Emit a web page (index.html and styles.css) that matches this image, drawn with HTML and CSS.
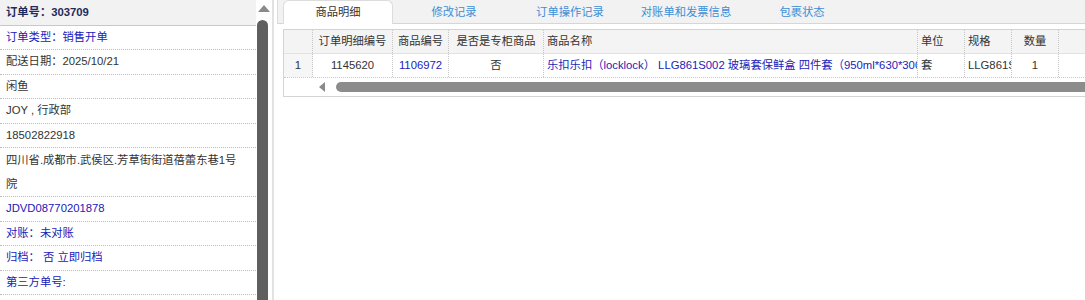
FILE: index.html
```html
<!DOCTYPE html>
<html lang="zh-CN">
<head>
  <meta charset="UTF-8">
  <title>订单详情</title>
  <link rel="stylesheet" href="styles.css">
</head>
<body>
  <div class="page">
    <div class="side">
      <div class="side-list">
        <div class="side-head">订单号：303709</div>
        <div class="side-row blue">订单类型：销售开单</div>
        <div class="side-row">配送日期：2025/10/21</div>
        <div class="side-row">闲鱼</div>
        <div class="side-row">JOY , 行政部</div>
        <div class="side-row">18502822918</div>
        <div class="side-row addr">四川省.成都市.武侯区.芳草街街道蓓蕾东巷1号院</div>
        <div class="side-row blue">JDVD08770201878</div>
        <div class="side-row blue">对账：未对账</div>
        <div class="side-row blue">归档：&nbsp;否 立即归档</div>
        <div class="side-row blue">第三方单号:</div>
      </div>
      <div class="vscroll">
        <div class="arrow-up"></div>
        <div class="vthumb"></div>
      </div>
    </div>

    <div class="main">
      <div class="tabs">
        <div class="tab active">商品明细</div>
        <div class="tab">修改记录</div>
        <div class="tab">订单操作记录</div>
        <div class="tab">对账单和发票信息</div>
        <div class="tab">包裹状态</div>
      </div>

      <div class="content">
        <div class="grid">
          <div class="grid-row head">
            <div class="cell rn"></div>
            <div class="cell c1">订单明细编号</div>
            <div class="cell c2">商品编号</div>
            <div class="cell c3">是否是专柜商品</div>
            <div class="cell c4 left">商品名称</div>
            <div class="cell c5 left">单位</div>
            <div class="cell c6 left">规格</div>
            <div class="cell c7">数量</div>
            <div class="cell rest"></div>
          </div>
          <div class="grid-row data">
            <div class="cell rn">1</div>
            <div class="cell c1">1145620</div>
            <div class="cell c2 link">1106972</div>
            <div class="cell c3">否</div>
            <div class="cell c4 left link">乐扣乐扣（locklock） LLG861S002 玻璃套保鲜盒 四件套（950ml*630*300ml*2）</div>
            <div class="cell c5 left">套</div>
            <div class="cell c6 left">LLG861S002</div>
            <div class="cell c7">1</div>
            <div class="cell rest"></div>
          </div>
          <div class="hscroll">
            <div class="arrow-left"></div>
            <div class="hthumb"></div>
          </div>
        </div>
      </div>
    </div>
  </div>
</body>
</html>
```

FILE: styles.css
```css
body {
  margin: 0;
  font-family: "Liberation Sans", "Noto Sans CJK SC", sans-serif;
  font-size: 11.3px;
  color: #333;
  background: #fff;
  overflow: hidden;
}

.page {
  display: flex;
  height: 300px;
}

/* left info panel */
.side {
  display: flex;
  width: 272px;
  flex-shrink: 0;
  border-right: 2px solid #e2e2e2;
}

.side-list {
  width: 256px;
}

.side-head {
  height: 26px;
  line-height: 25px;
  padding-left: 6px;
  background: #f2f2f2;
  border-bottom: 1px solid #c8c8c8;
  box-sizing: border-box;
  font-weight: bold;
  color: #1f2b5c;
}

.side-row {
  line-height: 23.4px;
  padding: 0 10px 0 6px;
  border-bottom: 1px dotted #bdbdbd;
}

.side-row.blue {
  color: #2020b8;
}

.side-row.addr {
  line-height: 24.2px;
}

.vscroll {
  width: 16px;
  display: flex;
  flex-direction: column;
  align-items: center;
}

.arrow-up {
  width: 0;
  height: 0;
  margin-top: 5px;
  border-left: 6px solid transparent;
  border-right: 6px solid transparent;
  border-bottom: 7px solid #8a8a8a;
}

.vthumb {
  width: 11px;
  flex: 1;
  margin-top: 8px;
  margin-right: 4px;
  background: #5f5f5f;
  border-radius: 6px 6px 0 0;
}

/* right pane */
.main {
  flex: 1;
  min-width: 0;
  margin-left: 3px;
}

.tabs {
  display: flex;
  gap: 6px;
  height: 24px;
  padding-left: 5px;
  background: #f2f2f2;
  border-left: 1px solid #dcdcdc;
  border-bottom: 1px solid #d6d6d6;
  box-sizing: border-box;
}

.tab {
  width: 110px;
  text-align: center;
  line-height: 24px;
  color: #3b8fd6;
}

.tab.active {
  background: #fff;
  color: #333;
  border-radius: 6px 6px 0 0;
  border: 1px solid #dcdcdc;
  border-bottom: none;
  line-height: 22px;
  box-sizing: border-box;
  height: 24px;
}

.content {
  padding: 5px 0 0 6px;
}

.grid {
  width: 820px;
  border: 1px solid #d4d4d4;
  border-right: none;
}

.grid-row {
  display: flex;
}

.grid-row.head {
  height: 23px;
  background: #f4f4f4;
  border-bottom: 1px solid #e2e2e2;
}

.grid-row.data {
  height: 23px;
  border-bottom: 1px dotted #c8c8c8;
}

.cell {
  flex-shrink: 0;
  line-height: 23px;
  text-align: center;
  white-space: nowrap;
  overflow: hidden;
  border-right: 1px dotted #c6c6c6;
  box-sizing: border-box;
}

.cell.left {
  text-align: left;
  padding-left: 3px;
}

.cell.link {
  color: #2222b8;
}

.rn { width: 29px; }
.data .rn { background: #f6f6f6; }
.c1 { width: 80px; }
.c2 { width: 56px; }
.c3 { width: 95px; }
.c4 { width: 374px; }
.c5 { width: 47px; }
.c6 { width: 47px; }
.c7 { width: 47px; }
.rest { flex: 1; border-right: none; }

.hscroll {
  height: 18px;
  display: flex;
  align-items: center;
  padding-left: 35px;
}

.arrow-left {
  width: 0;
  height: 0;
  border-top: 5px solid transparent;
  border-bottom: 5px solid transparent;
  border-right: 6px solid #8a8a8a;
}

.hthumb {
  flex: 1;
  height: 10px;
  margin-left: 11px;
  background: #8c8c8c;
  border-radius: 5px 0 0 5px;
}
```
